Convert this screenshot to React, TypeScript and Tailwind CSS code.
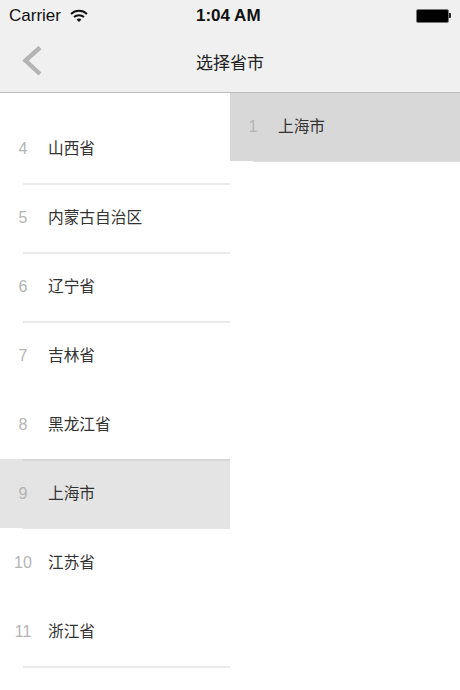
const font = { fontFamily: '"Liberation Sans", "Noto Sans CJK SC", sans-serif' };

type RowData = { n: string; t: string; active?: boolean; line?: "soft" | "strong" };

const rows: RowData[] = [
  { n: "4", t: "山西省", line: "soft" },
  { n: "5", t: "内蒙古自治区", line: "soft" },
  { n: "6", t: "辽宁省", line: "soft" },
  { n: "7", t: "吉林省" },
  { n: "8", t: "黑龙江省", line: "strong" },
  { n: "9", t: "上海市", active: true },
  { n: "10", t: "江苏省" },
  { n: "11", t: "浙江省", line: "soft" },
];

function Row({ n, t, active, line }: RowData) {
  if (active) {
    return (
      <div className="relative h-[69px] -mt-[1px] mb-[1px] flex flex-col bg-[#e4e4e4]">
        <div className="flex-1 flex items-center">
          <span className="w-[48px] pr-[2px] text-center text-[16px] text-[#b4b4b4]">{n}</span>
          <span className="text-[15.7px] text-[#333333]">{t}</span>
        </div>
        <div className="ml-[23px] h-[1px] -mb-[1px] bg-[#e6e6e6]" />
      </div>
    );
  }
  return (
    <div className="relative z-10 h-[69px] flex flex-col">
      <div className="flex-1 flex items-center">
        <span className="w-[48px] pr-[2px] text-center text-[16px] text-[#b4b4b4]">{n}</span>
        <span className="text-[15.7px] text-[#333333]">{t}</span>
      </div>
      <div
        className={`ml-[23px] h-[2px] -mb-[1px] ${
          line === "strong" ? "bg-[#d6d6d6]" : line === "soft" ? "bg-[#ebebeb]" : "bg-transparent"
        }`}
      />
    </div>
  );
}

export default function App() {
  return (
    <div className="w-[460px] h-[690px] bg-white overflow-hidden flex flex-col" style={font}>
      <header className="h-[93px] shrink-0 bg-[#f0f0f0] border-b border-[#bdbdbd] flex flex-col">
        <div className="h-[31px] flex items-center justify-between pl-[9px] pr-[9px] relative">
          <div className="flex items-center gap-[9px]">
            <span className="text-[17px] text-[#111111]">Carrier</span>
            <svg width="18" height="14" viewBox="0 0 18 14" fill="none" stroke="#111" strokeWidth="2">
              <path d="M1 5 C5.5 0.8 12.5 0.8 17 5" />
              <path d="M4 8 C6.8 5.5 11.2 5.5 14 8" />
              <path d="M9 13 L6.6 10.4 C8 9.3 10 9.3 11.4 10.4 Z" fill="#111" stroke="none" />
            </svg>
          </div>
          <span className="absolute left-[196px] top-[3px] text-[17px] font-bold text-[#111111]">1:04 AM</span>
          <div className="flex items-center">
            <div className="w-[33px] h-[14px] rounded-[2px] border border-[#777777] bg-black" />
            <div className="w-[2px] h-[5px] bg-[#222222] rounded-r-[1px]" />
          </div>
        </div>
        <div className="flex-1 flex items-center justify-center relative pt-[5px]">
          <svg className="absolute left-[21px] top-[14px]" width="22" height="32" viewBox="0 0 22 32" fill="none" stroke="#b4b4b4" strokeWidth="4.4">
            <path d="M19 2.5 L4.5 15.5 L19 29" />
          </svg>
          <span className="text-[17px] text-[#222222]">选择省市</span>
        </div>
      </header>
      <div className="flex-1 flex items-start min-h-0">
        <div className="w-[230px] pt-[22px] shrink-0">
          {rows.map((r) => (
            <Row key={r.n} {...r} />
          ))}
        </div>
        <div className="w-[230px] flex flex-col">
          <div className="h-[68px] bg-[#d8d8d8] flex items-center">
            <span className="w-[48px] pr-[2px] text-center text-[16px] text-[#b4b4b4]">1</span>
            <span className="text-[15.7px] text-[#333333]">上海市</span>
          </div>
          <div className="ml-[23px] h-[1px] bg-[#e0e0e0]" />
        </div>
      </div>
    </div>
  );
}
